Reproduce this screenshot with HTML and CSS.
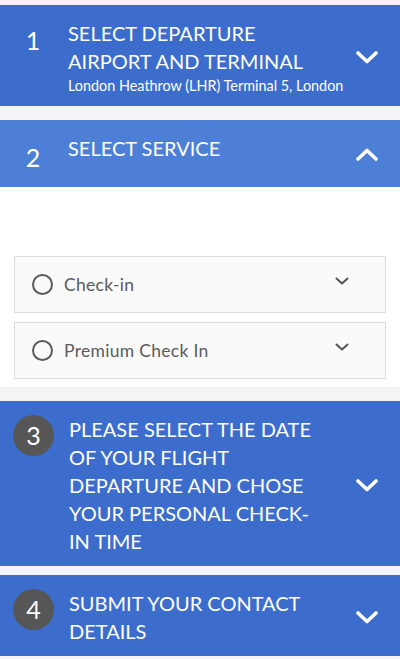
FILE: index.html
```html
<!DOCTYPE html>
<html lang="en">
<head>
<meta charset="utf-8">
<title>Check-in booking</title>
<link rel="stylesheet" href="styles.css">
</head>
<body>
<div class="page">
  <section class="step done">
    <div class="num">1</div>
    <div class="text">
      <div class="title">SELECT DEPARTURE AIRPORT AND TERMINAL</div>
      <div class="sub">London Heathrow (LHR) Terminal 5, London</div>
    </div>
    <svg class="chev" viewBox="0 0 22 13"><path d="M2 2 L11 10.5 L20 2"/></svg>
  </section>

  <section class="step active">
    <div class="num">2</div>
    <div class="text">
      <div class="title">SELECT SERVICE</div>
    </div>
    <svg class="chev" viewBox="0 0 22 13"><path d="M2 11 L11 2.5 L20 11"/></svg>
  </section>

  <div class="services">
    <div class="option">
      <span class="radio"></span>
      <span class="label">Check-in</span>
      <svg class="mini" viewBox="0 0 14 8"><path d="M1.5 1.5 L7 6.5 L12.5 1.5"/></svg>
    </div>
    <div class="option">
      <span class="radio"></span>
      <span class="label">Premium Check In</span>
      <svg class="mini" viewBox="0 0 14 8"><path d="M1.5 1.5 L7 6.5 L12.5 1.5"/></svg>
    </div>
  </div>

  <section class="step date">
    <div class="num circle">3</div>
    <div class="text">
      <div class="title">PLEASE SELECT THE DATE OF YOUR FLIGHT DEPARTURE AND CHOSE YOUR PERSONAL CHECK-IN TIME</div>
    </div>
    <svg class="chev" viewBox="0 0 22 13"><path d="M2 2 L11 10.5 L20 2"/></svg>
  </section>

  <section class="step">
    <div class="num circle">4</div>
    <div class="text">
      <div class="title">SUBMIT YOUR CONTACT DETAILS</div>
    </div>
    <svg class="chev" viewBox="0 0 22 13"><path d="M2 2 L11 10.5 L20 2"/></svg>
  </section>
</div>
</body>
</html>
```

FILE: styles.css
```css
* { box-sizing: border-box; }
html, body { margin: 0; padding: 0; }
body {
  background: #f5f4f9;
  font-family: Lato, "Open Sans", "Liberation Sans", sans-serif;
  color: #fff;
}
.page {
  padding-top: 5px;
  display: flex;
  flex-direction: column;
}
.step {
  display: flex;
  align-items: flex-start;
  background: #3c6dcc;
  padding: 14px 16px 11px 13px;
  margin-bottom: 14px;
}
.step.active {
  background: #4e7fd6;
  margin-bottom: 0;
  padding-bottom: 13px;
}
.step.done { padding-bottom: 10px; }
.step.date { margin-bottom: 9px; }
.num {
  flex: 0 0 40px;
  width: 40px;
  height: 40px;
  display: flex;
  align-items: center;
  justify-content: center;
  font-size: 25px;
  line-height: 1;
}
.done .num { align-items: flex-start; padding-top: 9px; }
.active .num { align-items: flex-start; padding-top: 11px; }
.num.circle {
  background: #565656;
  border-radius: 50%;
  height: 41px;
  flex-basis: 41px;
  width: 41px;
}
.text {
  flex: 0 0 252px;
  width: 252px;
  margin-left: 15px;
}
.title {
  font-size: 20px;
  line-height: 28px;
}
.sub {
  font-size: 14.4px;
  line-height: 20px;
  margin-top: 1px;
  white-space: nowrap;
}
.chev {
  align-self: center;
  margin-left: auto;
  width: 22px;
  height: 13px;
  flex: 0 0 22px;
  margin-right: 6px;
  fill: none;
  stroke: #fff;
  stroke-width: 3.6;
  stroke-linecap: round;
  stroke-linejoin: round;
}
.services {
  background: #fff;
  padding: 69px 14px 8px 14px;
  border-bottom: 14px solid #f4f4f4;
  display: flex;
  flex-direction: column;
  gap: 9px;
}
.option {
  display: flex;
  align-items: center;
  height: 57px;
  border: 1px solid #dcdcdc;
  background: #fafafa;
  padding: 0 36px 0 17px;
}
.radio {
  width: 21px;
  height: 21px;
  border: 2px solid #5a5a5a;
  border-radius: 50%;
  flex: 0 0 21px;
}
.label {
  flex: 1;
  margin-left: 11px;
  font-size: 17.5px;
  color: #5a5a5a;
  letter-spacing: 0.3px;
}
.mini {
  width: 14px;
  height: 8px;
  margin-bottom: 8px;
  fill: none;
  stroke: #555;
  stroke-width: 2;
  stroke-linecap: round;
  stroke-linejoin: round;
}
```
